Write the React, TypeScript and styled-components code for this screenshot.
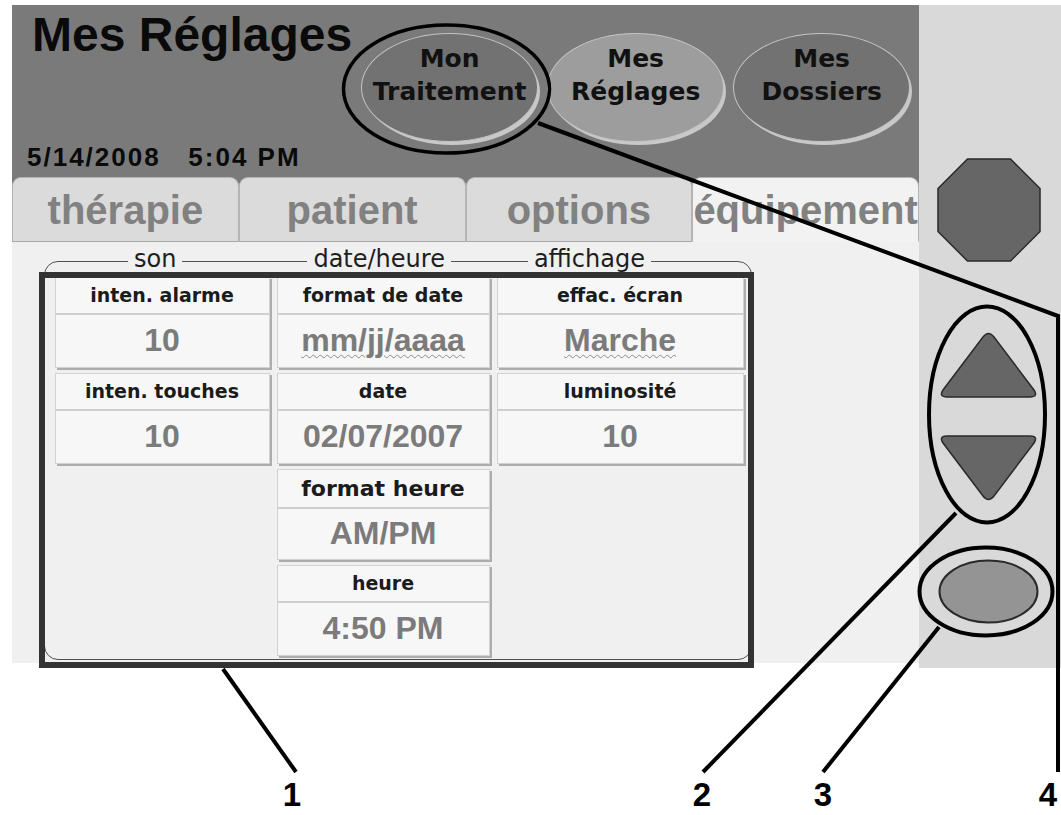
import React from "react";
import styled, { createGlobalStyle } from "styled-components";

const GlobalStyle = createGlobalStyle`
  html, body { margin: 0; padding: 0; background: #ffffff; }
  body { font-family: "Liberation Sans", Arial, sans-serif; }
`;

const Page = styled.div`
  position: relative;
  width: 1061px;
  height: 815px;
  overflow: hidden;
  background: #ffffff;
`;

const Device = styled.div`
  display: flex;
  align-items: flex-start;
  padding: 5px 0 0 12px;
`;

const Screen = styled.div`
  width: 907px;
  display: flex;
  flex-direction: column;
`;

const Header = styled.header`
  height: 172px;
  background: #7a7a7a;
  display: flex;
  flex-direction: column;
  justify-content: space-between;
`;

const TopRow = styled.div`
  display: flex;
  align-items: flex-start;
  padding: 6px 0 0 20px;
`;

const Title = styled.h1`
  margin: 0;
  font: bold 48px/48px "Liberation Sans", Arial, sans-serif;
  color: #0a0a0a;
  white-space: nowrap;
`;

const NavRow = styled.nav`
  display: flex;
  gap: 9px;
  margin: 22px 0 0 9px;
`;

const NavButton = styled.div<{ $active?: boolean }>`
  width: 177px;
  height: 109px;
  box-sizing: border-box;
  border-radius: 50%;
  background: ${(p) => (p.$active ? "#9d9d9d" : "#727272")};
  border: 1.5px solid #c4c4c4;
  box-shadow: 3px 4px 0 -1px #c8c8c8;
  display: flex;
  flex-direction: column;
  align-items: center;
  padding-top: 8px;
  font: bold 25px/33px "DejaVu Sans", sans-serif;
  color: #111111;
  white-space: nowrap;
`;

const DateLine = styled.div`
  padding: 0 0 7px 15px;
  font: bold 26px/26px "Liberation Sans", Arial, sans-serif;
  letter-spacing: 2px;
  color: #0a0a0a;
  white-space: pre;
`;

const TabRow = styled.div`
  display: flex;
  height: 65px;
  background: #7a7a7a;
`;

const Tab = styled.div<{ $active?: boolean }>`
  flex: 1;
  min-width: 0;
  display: flex;
  align-items: center;
  justify-content: center;
  box-sizing: border-box;
  border: 1px solid #b4b4b4;
  border-bottom-color: ${(p) => (p.$active ? "#f2f2f2" : "#a8a8a8")};
  border-radius: 9px 9px 0 0;
  background: ${(p) => (p.$active ? "#f2f2f2" : "#dbdbdb")};
  font: bold 40px/40px "Liberation Sans", Arial, sans-serif;
  color: #818181;
  white-space: nowrap;
`;

const Body = styled.main`
  height: 421px;
  box-sizing: border-box;
  background: #f0f0f0;
  padding: 19px 0 0 32px;
`;

const GroupBox = styled.section`
  position: relative;
  width: 708px;
  height: 399px;
  box-sizing: border-box;
  border: 1.5px solid #505050;
  border-radius: 14px;
  padding: 14.5px 7px 0 9.5px;
`;

const LegendRow = styled.div`
  position: absolute;
  top: -17px;
  left: 0;
  height: 28px;
  display: flex;
  align-items: center;
`;

const Legend = styled.span<{ $offset: number }>`
  margin-left: ${(p) => p.$offset}px;
  padding: 0 6px;
  background: #f0f0f0;
  font: 24px/28px "DejaVu Sans", sans-serif;
  color: #1e1e1e;
  white-space: nowrap;
`;

const CellGrid = styled.div`
  display: grid;
  grid-template-columns: 215px 213px 247px;
  grid-template-rows: repeat(4, 91px);
  column-gap: 7px;
  row-gap: 5px;
`;

const Cell = styled.div<{ $col: number; $row: number }>`
  grid-column: ${(p) => p.$col};
  grid-row: ${(p) => p.$row};
  display: flex;
  flex-direction: column;
  box-sizing: border-box;
  background: #f7f7f7;
  border: 1px solid #d2d2d2;
  box-shadow: 2px 2px 0 #adadad;
`;

const CellLabel = styled.div<{ $large?: boolean }>`
  height: ${(p) => (p.$large ? 37 : 35)}px;
  display: flex;
  align-items: center;
  justify-content: center;
  border-bottom: 2px solid #d0d0d0;
  font: bold ${(p) => (p.$large ? 22 : 19)}px "DejaVu Sans", sans-serif;
  color: #1b1b1b;
  white-space: nowrap;
`;

const CellValue = styled.div`
  flex: 1;
  display: flex;
  align-items: center;
  justify-content: center;
  font: bold 32px "Liberation Sans", Arial, sans-serif;
  color: #7b7b7b;
  white-space: nowrap;
`;

const Squiggle = styled.span`
  text-decoration: underline wavy #8c8c8c;
  text-decoration-thickness: 1px;
  text-underline-offset: 3px;
`;

const SidePanel = styled.aside`
  width: 142px;
  height: 663px;
  box-sizing: border-box;
  background: #d9d9d9;
  display: flex;
  flex-direction: column;
  align-items: center;
  padding: 153px 3px 0 0;
`;

const ControlIcon = styled.svg<{ $gap: number }>`
  display: block;
  flex: none;
  margin-top: ${(p) => p.$gap}px;
`;

const Overlay = styled.svg`
  position: absolute;
  left: 0;
  top: 0;
  pointer-events: none;
`;

const CalloutNumber = styled.text`
  font: bold 33px "Liberation Sans", Arial, sans-serif;
  fill: #000000;
`;

type CellData = {
  col: number;
  row: number;
  label: string;
  value: string;
  large?: boolean;
  squiggle?: boolean;
};

const cells: CellData[] = [
  { col: 1, row: 1, label: "inten. alarme", value: "10" },
  { col: 1, row: 2, label: "inten. touches", value: "10" },
  { col: 2, row: 1, label: "format de date", value: "mm/jj/aaaa", squiggle: true },
  { col: 2, row: 2, label: "date", value: "02/07/2007" },
  { col: 2, row: 3, label: "format heure", value: "AM/PM", large: true },
  { col: 2, row: 4, label: "heure", value: "4:50 PM" },
  { col: 3, row: 1, label: "effac. écran", value: "Marche", squiggle: true },
  { col: 3, row: 2, label: "luminosité", value: "10" },
];

const navItems = [
  { top: "Mon", bottom: "Traitement", active: false },
  { top: "Mes", bottom: "Réglages", active: true },
  { top: "Mes", bottom: "Dossiers", active: false },
];

const tabs = [
  { label: "thérapie", active: false },
  { label: "patient", active: false },
  { label: "options", active: false },
  { label: "équipement", active: true },
];

const callouts = [
  { n: "1", x: 292 },
  { n: "2", x: 702 },
  { n: "3", x: 823 },
  { n: "4", x: 1048 },
];

export default function App() {
  return (
    <Page>
      <GlobalStyle />
      <Device>
        <Screen>
          <Header>
            <TopRow>
              <Title>Mes Réglages</Title>
              <NavRow>
                {navItems.map((n) => (
                  <NavButton key={n.bottom} $active={n.active}>
                    <span>{n.top}</span>
                    <span>{n.bottom}</span>
                  </NavButton>
                ))}
              </NavRow>
            </TopRow>
            <DateLine>{"5/14/2008   5:04 PM"}</DateLine>
          </Header>
          <TabRow>
            {tabs.map((t) => (
              <Tab key={t.label} $active={t.active}>
                {t.label}
              </Tab>
            ))}
          </TabRow>
          <Body>
            <GroupBox>
              <LegendRow>
                <Legend $offset={83}>son</Legend>
                <Legend $offset={125}>date/heure</Legend>
                <Legend $offset={77}>affichage</Legend>
              </LegendRow>
              <CellGrid>
                {cells.map((c) => (
                  <Cell key={c.label} $col={c.col} $row={c.row}>
                    <CellLabel $large={c.large}>{c.label}</CellLabel>
                    <CellValue>
                      {c.squiggle ? <Squiggle>{c.value}</Squiggle> : c.value}
                    </CellValue>
                  </Cell>
                ))}
              </CellGrid>
            </GroupBox>
          </Body>
        </Screen>
        <SidePanel>
          <ControlIcon $gap={0} width="104" height="104" viewBox="0 0 104 104">
            <polygon
              points="30.5,1 73.5,1 103,30.5 103,73.5 73.5,103 30.5,103 1,73.5 1,30.5"
              fill="#666666"
              stroke="#2a2a2a"
              strokeWidth="1.5"
            />
          </ControlIcon>
          <ControlIcon $gap={68} width="101" height="69" viewBox="0 0 101 69">
            <path
              d="M45 7 Q50.5 0 56 7 L96 60 Q100.5 67 92 67 L9 67 Q0.5 67 5 60 Z"
              fill="#666666"
              stroke="#2a2a2a"
              strokeWidth="1.5"
            />
          </ControlIcon>
          <ControlIcon $gap={35} width="101" height="69" viewBox="0 0 101 69">
            <path
              d="M9 2 L92 2 Q100.5 2 96 9 L56 62 Q50.5 69 45 62 L5 9 Q0.5 2 9 2 Z"
              fill="#666666"
              stroke="#2a2a2a"
              strokeWidth="1.5"
            />
          </ControlIcon>
          <ControlIcon $gap={56} width="101" height="65" viewBox="0 0 101 65">
            <ellipse cx="50.5" cy="32.5" rx="49" ry="31" fill="#949494" stroke="#2a2a2a" strokeWidth="2" />
          </ControlIcon>
        </SidePanel>
      </Device>

      <Overlay width="1061" height="815" viewBox="0 0 1061 815">
        <rect x="42" y="275" width="709" height="390" fill="none" stroke="#333333" strokeWidth="6" />
        <ellipse cx="446.5" cy="89" rx="103" ry="64" fill="none" stroke="#000" strokeWidth="3.5" />
        <ellipse cx="987" cy="414.5" rx="58" ry="108" fill="none" stroke="#000" strokeWidth="4" />
        <ellipse cx="986" cy="591.5" rx="66.5" ry="44" fill="none" stroke="#000" strokeWidth="4" />
        <line x1="223" y1="669" x2="296" y2="772" stroke="#000" strokeWidth="4" />
        <line x1="956" y1="513" x2="703" y2="772" stroke="#000" strokeWidth="4" />
        <line x1="939" y1="627" x2="823" y2="772" stroke="#000" strokeWidth="4" />
        <polyline points="538,123 1058,316 1058,772" fill="none" stroke="#000" strokeWidth="4" />
        {callouts.map((c) => (
          <CalloutNumber key={c.n} x={c.x} y="806" textAnchor="middle">
            {c.n}
          </CalloutNumber>
        ))}
      </Overlay>
    </Page>
  );
}
